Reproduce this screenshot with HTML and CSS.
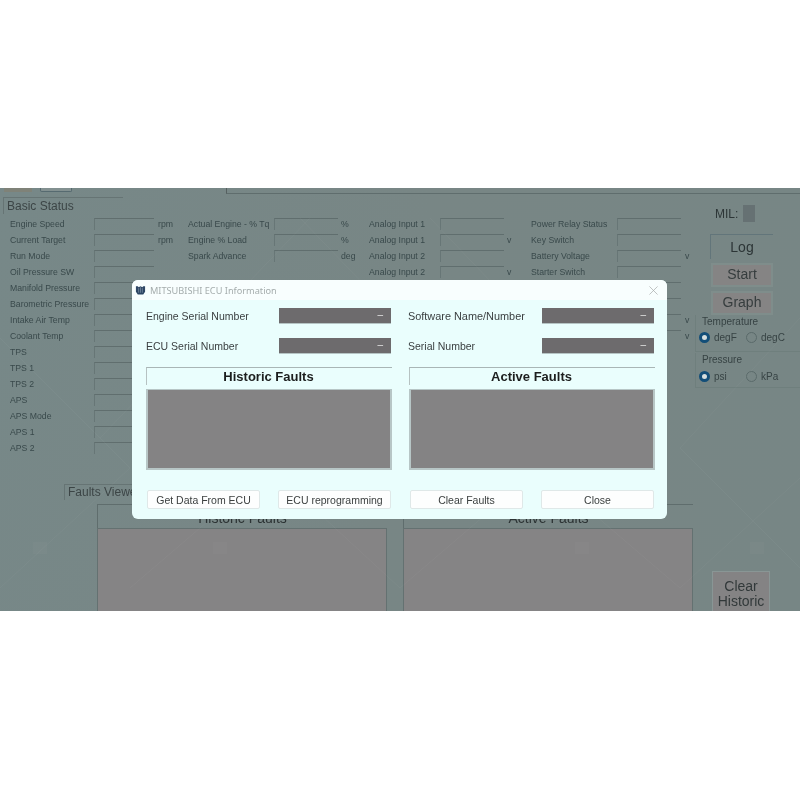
FILE: index.html
```html
<!DOCTYPE html>
<html lang="en">
<head>
<meta charset="utf-8">
<title>MITSUBISHI ECU Information</title>
<link rel="stylesheet" href="styles.css">
</head>
<body>
<main class="app">
  <div class="topbar"><span class="tab tab-a"></span><span class="tab tab-b"></span><span class="top-field"></span></div>
  <div class="upper">
    <section class="status">
      <h2 class="legend">Basic Status</h2>
      <div class="status-grid">
        <div class="col col1">
          <div class="row"><span>Engine Speed</span><i></i><b>rpm</b></div>
          <div class="row"><span>Current Target</span><i></i><b>rpm</b></div>
          <div class="row"><span>Run Mode</span><i></i><b></b></div>
          <div class="row"><span>Oil Pressure SW</span><i></i><b></b></div>
          <div class="row"><span>Manifold Pressure</span><i></i><b></b></div>
          <div class="row"><span>Barometric Pressure</span><i></i><b></b></div>
          <div class="row"><span>Intake Air Temp</span><i></i><b></b></div>
          <div class="row"><span>Coolant Temp</span><i></i><b></b></div>
          <div class="row"><span>TPS</span><i></i><b></b></div>
          <div class="row"><span>TPS 1</span><i></i><b></b></div>
          <div class="row"><span>TPS 2</span><i></i><b></b></div>
          <div class="row"><span>APS</span><i></i><b></b></div>
          <div class="row"><span>APS Mode</span><i></i><b></b></div>
          <div class="row"><span>APS 1</span><i></i><b></b></div>
          <div class="row"><span>APS 2</span><i></i><b></b></div>
        </div>
        <div class="col col2">
          <div class="row"><span>Actual Engine - % Tq</span><i></i><b>%</b></div>
          <div class="row"><span>Engine % Load</span><i></i><b>%</b></div>
          <div class="row"><span>Spark Advance</span><i></i><b>deg</b></div>
        </div>
        <div class="col col3">
          <div class="row"><span>Analog Input 1</span><i></i><b></b></div>
          <div class="row"><span>Analog Input 1</span><i></i><b>v</b></div>
          <div class="row"><span>Analog Input 2</span><i></i><b></b></div>
          <div class="row"><span>Analog Input 2</span><i></i><b>v</b></div>
        </div>
        <div class="col col4">
          <div class="row"><span>Power Relay Status</span><i></i><b></b></div>
          <div class="row"><span>Key Switch</span><i></i><b></b></div>
          <div class="row"><span>Battery Voltage</span><i></i><b>v</b></div>
          <div class="row"><span>Starter Switch</span><i></i><b></b></div>
          <div class="row"><span></span><i></i><b></b></div>
          <div class="row"><span></span><i></i><b></b></div>
          <div class="row"><span></span><i></i><b>v</b></div>
          <div class="row"><span></span><i></i><b>v</b></div>
        </div>
      </div>
    </section>
    <aside class="side">
      <div class="mil">MIL: <span class="lamp"></span></div>
      <div class="log">Log</div>
      <div class="btn-dark">Start</div>
      <div class="btn-dark btn-graph">Graph</div>
      <div class="units units-temp">
        <div class="unit-title">Temperature</div>
        <div class="radios"><span class="radio on"></span><span class="rlabel">degF</span><span class="radio"></span><span class="rlabel">degC</span></div>
      </div>
      <div class="units units-press">
        <div class="unit-title">Pressure</div>
        <div class="radios"><span class="radio on"></span><span class="rlabel">psi</span><span class="radio"></span><span class="rlabel">kPa</span></div>
      </div>
    </aside>
  </div>
  <section class="viewer">
    <div class="viewer-legend">Faults Viewer</div>
    <div class="viewer-body">
      <div class="panel"><div class="panel-head">Historic Faults</div><div class="panel-box"></div></div>
      <div class="panel"><div class="panel-head">Active Faults</div><div class="panel-box"></div></div>
      <div class="clear-btn">Clear<br>Historic</div>
    </div>
  </section>
  <svg class="watermark" viewBox="0 0 800 423" aria-hidden="true">
    <path d="M0 150L130 280M130 280L0 400M100 250L310 30M270 280L130 400M270 280L400 400M400 400L540 280M540 280L680 400M680 400L800 290M540 280L300 30M680 260L800 130M430 30L640 250M680 260L800 380"/>
    <path class="mark" d="M33 354h14v12H33zM213 354h14v12h-14zM575 354h14v12h-14zM750 354h14v12h-14z"/>
  </svg>
  <div class="dialog">
    <header class="dialog-title">
      <svg class="logo" viewBox="0 0 12 12" aria-hidden="true"><path d="M1 2h2l1 1 2-1 2 1 1-1h2v6l-2 3H3L1 8z"/><path class="logo-line" d="M4 4v5M6 3v6M8 4v5"/></svg>
      <span class="dialog-name">MITSUBISHI ECU Information</span>
      <svg class="close" viewBox="0 0 10 10" aria-hidden="true"><path d="M.5.5l9 9M9.5.5l-9 9"/></svg>
    </header>
    <div class="dialog-body">
      <div class="dialog-col">
        <div class="info"><span>Engine Serial Number</span><em>–</em></div>
        <div class="info"><span>ECU Serial Number</span><em>–</em></div>
        <h3 class="fault-head">Historic Faults</h3>
        <div class="fault-box"></div>
        <div class="actions"><button>Get Data From ECU</button><button>ECU reprogramming</button></div>
      </div>
      <div class="dialog-col dialog-col-right">
        <div class="info"><span>Software Name/Number</span><em>–</em></div>
        <div class="info"><span>Serial Number</span><em>–</em></div>
        <h3 class="fault-head">Active Faults</h3>
        <div class="fault-box"></div>
        <div class="actions"><button>Clear Faults</button><button>Close</button></div>
      </div>
    </div>
  </div>
</main>
</body>
</html>
```

FILE: styles.css
```css
* { box-sizing: border-box; }
html, body { margin: 0; background: #fff; }
body { padding-top: 188px; font-family: "Liberation Sans", Arial, sans-serif; }

.app {
  position: relative;
  width: 800px;
  height: 423px;
  overflow: hidden;
  background: linear-gradient(100deg, #778888 0%, #788685 50%, #778685 100%);
  color: #333b3c;
  filter: blur(.35px);
}

.topbar { height: 6px; display: flex; align-items: flex-start; }
.tab { display: block; height: 4px; }
.tab-a { width: 28px; margin-left: 4px; background: #7f8278; }
.tab-b { width: 32px; margin-left: 8px; border: 1px solid #566a70; border-top: 0; border-radius: 0 0 2px 2px; background: #829090; }
.top-field { flex: 1; height: 6px; margin-left: 154px; border-left: 1px solid #566060; border-bottom: 1px solid #5f6d6d; }

.upper { display: flex; height: 290px; }
.status { width: 694px; padding: 3px 0 0 3px; }
.legend {
  width: 120px; height: 17px; margin: 0;
  border-top: 1px solid #667474; border-left: 1px solid #667474;
  padding-left: 3px;
  font-size: 12px; font-weight: 400; line-height: 17px; color: #3c4546;
}
.status-grid { display: flex; padding: 2px 0 0 7px; }
.col { display: flex; flex-direction: column; }
.row { display: flex; height: 16px; align-items: center; font-size: 8.7px; color: #39494b; }
.row span { display: block; white-space: nowrap; }
.row i { display: block; height: 12px; width: 60px; border-top: 1px solid #606e6e; border-left: 1px solid #677676; }
.row b { display: block; font-weight: 400; margin-left: 4px; }
.col1 { width: 178px; }
.col1 span { width: 84px; }
.col1 b { width: 30px; }
.col2 { width: 181px; }
.col2 span { width: 86px; }
.col2 i { width: 64px; }
.col2 b { margin-left: 3px; }
.col3 { width: 162px; }
.col3 span { width: 71px; }
.col3 i { width: 64px; }
.col3 b { margin-left: 3px; }
.col4 span { width: 86px; }
.col4 i { width: 64px; }

.side { flex: 1; display: flex; flex-direction: column; align-items: flex-start; padding: 11px 0 0 1px; }
.mil { display: flex; align-items: center; margin-left: 20px; height: 17px; font-size: 12px; color: #2d3637; gap: 5px; }
.lamp { display: block; width: 12px; height: 17px; background: #667173; }
.log { width: 63px; height: 25px; margin: 12px 0 0 15px; border-top: 1px solid #62757a; border-left: 1px solid #62757a; font-size: 14px; line-height: 25px; text-align: center; color: #2c3536; }
.btn-dark { width: 58px; height: 20px; margin: 6px 0 0 18px; background: #858484; box-shadow: 0 0 0 2px #7f8d8b; font-size: 14px; line-height: 19px; text-align: center; color: #363d3e; }
.btn-graph { margin-top: 8px; }
.units { width: 105px; border-left: 1px solid #6f7f7d; border-bottom: 1px solid #6f7f7d; font-size: 10px; color: #374344; }
.units-temp { height: 37px; margin-top: 2px; }
.units-press { height: 35px; margin-top: 1px; }
.unit-title { padding-left: 6px; line-height: 13px; }
.radios { display: flex; align-items: center; padding: 4px 0 0 3px; }
.units-press .radios { padding-top: 5px; }
.radio { display: block; flex: none; width: 11px; height: 11px; border-radius: 50%; border: 1px solid #5a6a6a; }
.radio.on { border: 3px solid #134e78; background: #d6dede; }
.rlabel { width: 36px; padding-left: 4px; }

.viewer { padding-left: 64px; }
.viewer-legend { width: 140px; height: 16px; border-top: 1px solid #667474; border-left: 1px solid #667474; padding-left: 3px; font-size: 12px; line-height: 15px; color: #3c4546; }
.viewer-body { display: flex; margin: 4px 0 0 33px; }
.panel { width: 290px; margin-right: 16px; flex: none; }
.panel-head { height: 24px; border-top: 1px solid #5f6d6d; border-left: 1px solid #5f6d6d; font-size: 14px; line-height: 26px; text-align: center; color: #2c3334; }
.panel-box { height: 90px; background: #858485; border: 1px solid #647171; }
.clear-btn { flex: none; width: 56px; height: 50px; margin: 68px 0 0 4px; background: #848384; box-shadow: 0 0 0 1px #899695; font-size: 14px; line-height: 15px; padding-top: 7px; text-align: center; color: #32393a; }

.watermark { position: absolute; inset: 0; width: 800px; height: 423px; pointer-events: none; }
.watermark path { fill: none; stroke: #fff; stroke-opacity: .035; stroke-width: 1; }
.watermark path.mark { fill: #fff; fill-opacity: .025; stroke: none; }

.dialog {
  position: absolute; left: 132px; top: 92px;
  width: 535px; height: 239px;
  border-radius: 6px;
  overflow: hidden;
  background: #eafefd;
  color: #3a3f40;
}
.dialog-title { height: 20px; display: flex; align-items: center; padding: 0 8px 0 3px; background: #f8fefe; }
.logo { width: 11px; height: 12px; margin-right: 4px; }
.logo path { fill: #2d4664; }
.logo path.logo-line { fill: none; stroke: #8a9cb0; stroke-width: .7; }
.dialog-name { flex: 1; font-family: "Noto Sans", sans-serif; font-size: 9.2px; color: #a5adad; }
.close { width: 9px; height: 9px; margin-right: 1px; }
.close path { fill: none; stroke: #a8acac; stroke-width: .8; }

.dialog-body { display: grid; grid-template-columns: 246px 247px; column-gap: 16px; padding: 8px 0 0 14px; }
.dialog-col { display: flex; flex-direction: column; }
.info { display: flex; align-items: center; justify-content: space-between; height: 16px; margin-bottom: 14px; font-size: 10.5px; color: #3a3f40; }
.info em {
  display: block; width: 112px; height: 16px; margin-right: 1px;
  background: #6d6b6d; border-bottom: 1px solid #b5c4c4;
  font-style: normal; font-size: 10px; line-height: 13px; text-align: right; padding-right: 8px; color: #e6e6e6;
}
.dialog-col .info:nth-child(2) { margin-bottom: 13px; }
.dialog-col-right .info:first-child span { font-size: 10.9px; }
.fault-head { height: 18px; margin: 0; padding-right: 2px; border-top: 1px solid #a9b6b6; border-left: 1px solid #b6c2c2; font-size: 13px; line-height: 17px; text-align: center; color: #1c1e1e; font-weight: 700; }
.fault-box { height: 81px; margin: 4px 0 0 0; background: #848384; border: 2px solid #b7c6c6; border-top-width: 1px; }
.dialog-col-right .fault-head, .dialog-col-right .fault-box { margin-left: 1px; }
.actions { display: flex; justify-content: space-between; margin-top: 20px; padding: 0 1px; }
.dialog-col-right .actions { padding: 0 1px 0 2px; }
.actions button {
  width: 113px; height: 19px; padding: 0;
  border: 1px solid #dfe8e8; border-radius: 2px;
  background: #fdfefe;
  font-family: "Liberation Sans", Arial, sans-serif; font-size: 10.5px; color: #3c4040;
}
```
